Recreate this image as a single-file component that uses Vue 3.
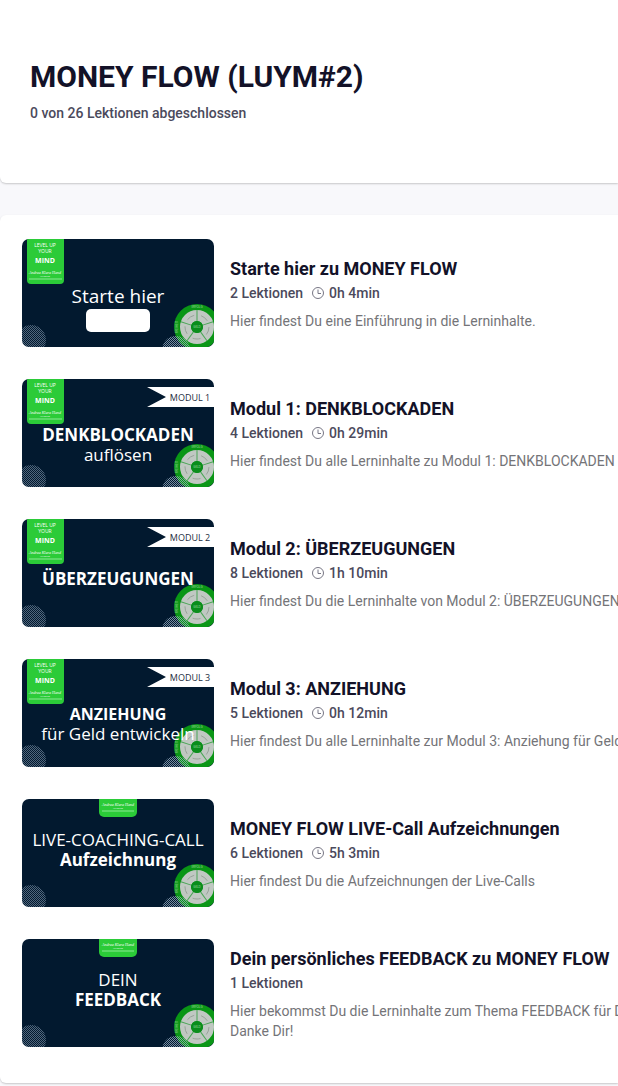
<script setup>
const spokes = [-90, -18, 54, 126, 198]

const modules = [
  {
    title: 'Starte hier zu MONEY FLOW', lessons: 2, time: '0h 4min',
    text: 'Hier findest Du eine Einführung in die Lerninhalte.',
    box: true,
    lines: [{ t: 'Starte hier', y: 64, size: 19 }],
  },
  {
    title: 'Modul 1: DENKBLOCKADEN', lessons: 4, time: '0h 29min',
    text: 'Hier findest Du alle Lerninhalte zu Modul 1: DENKBLOCKADEN',
    flag: 'MODUL 1',
    lines: [{ t: 'DENKBLOCKADEN', y: 62, size: 17, bold: true }, { t: 'auflösen', y: 82, size: 17 }],
  },
  {
    title: 'Modul 2: ÜBERZEUGUNGEN', lessons: 8, time: '1h 10min',
    text: 'Hier findest Du die Lerninhalte von Modul 2: ÜBERZEUGUNGEN',
    flag: 'MODUL 2',
    lines: [{ t: 'ÜBERZEUGUNGEN', y: 66, size: 17, bold: true }],
  },
  {
    title: 'Modul 3: ANZIEHUNG', lessons: 5, time: '0h 12min',
    text: 'Hier findest Du alle Lerninhalte zur Modul 3: Anziehung für Geld entwickeln',
    flag: 'MODUL 3',
    lines: [{ t: 'ANZIEHUNG', y: 61, size: 16, bold: true }, { t: 'für Geld entwickeln', y: 81, size: 17 }],
  },
  {
    title: 'MONEY FLOW LIVE-Call Aufzeichnungen', lessons: 6, time: '5h 3min',
    text: 'Hier findest Du die Aufzeichnungen der Live-Calls',
    small: true,
    lines: [{ t: 'LIVE-COACHING-CALL', y: 47, size: 17 }, { t: 'Aufzeichnung', y: 67, size: 17, bold: true }],
  },
  {
    title: 'Dein persönliches FEEDBACK zu MONEY FLOW', lessons: 1, time: '',
    text: 'Hier bekommst Du die Lerninhalte zum Thema FEEDBACK für Dich.\nDanke Dir!',
    small: true,
    lines: [{ t: 'DEIN', y: 47, size: 17 }, { t: 'FEEDBACK', y: 67, size: 17, bold: true }],
  },
]
</script>

<template>
  <main class="page">
    <header class="card head">
      <h1>MONEY FLOW (LUYM#2)</h1>
      <p class="meta">0 von 26 Lektionen abgeschlossen</p>
    </header>

    <section class="card list">
      <article v-for="(m, i) in modules" :key="i" class="item">
        <svg class="thumb" viewBox="0 0 192 108" role="img" :aria-label="m.title">
          <defs>
            <pattern :id="'dots' + i" width="2" height="2" patternUnits="userSpaceOnUse">
              <path d="M0 0h1v1H0zM1 1h1v1H1z" fill="#9db2c8" />
            </pattern>
          </defs>
          <rect width="192" height="108" fill="#02192f" />
          <circle cx="9" cy="101" r="15" :fill="`url(#dots${i})`" opacity=".5" />

          <g v-if="m.small">
            <path d="M77 0h38v13a5 5 0 0 1-5 5H82a5 5 0 0 1-5-5z" fill="#2bcb38" />
            <text class="sign" x="96" y="7">Andrea Klara Hand</text>
            <text class="tiny" x="96" y="10">AKADEMIE</text>
            <path d="M80 12h32" stroke="#8be893" />
          </g>
          <g v-else>
            <path d="M5 0h37v41a4 4 0 0 1-4 4H9a4 4 0 0 1-4-4z" fill="#2bcb38" />
            <text class="badge" x="23" y="8">LEVEL UP</text>
            <text class="badge" x="23" y="14">YOUR</text>
            <text class="badge strong" x="23" y="24">MIND</text>
            <text class="sign" x="23" y="35">Andrea Klara Hand</text>
            <text class="tiny" x="23" y="38">AKADEMIE</text>
            <path d="M7 40h33" stroke="#8be893" />
          </g>

          <g v-if="m.flag">
            <path d="M125 8h67v20h-67l19-10z" fill="#fff" />
            <text class="flag" x="168" y="22">{{ m.flag }}</text>
          </g>

          <g transform="translate(175 88)">
            <circle r="23" fill="#0a9616" />
            <circle r="11.5" fill="none" stroke="#c0c8c2" stroke-width="11" />
            <path v-for="a in spokes" :key="a" d="M6 0H17" stroke="#4aa556" :transform="`rotate(${a})`" />
            <circle
              r="12" fill="none" stroke="#98a39a"
              stroke-dasharray="8 7.08" stroke-dashoffset="15"
            />
            <circle r="6" fill="#0a8d1c" />
            <text class="gold" y="1">GELD</text>
            <text class="gold" y="-19">ERFOLG</text>
            <text class="gold" y="-19" transform="rotate(-90)">FREIHEIT</text>
          </g>
          <circle cx="154" cy="111" r="14" :fill="`url(#dots${i})`" opacity=".75" />

          <rect v-if="m.box" x="64" y="70" width="64" height="23" rx="5" fill="#fff" />
          <text
            v-for="l in m.lines" :key="l.t" x="96" :y="l.y" :font-size="l.size"
            :class="{ strong: l.bold }"
          >{{ l.t }}</text>
        </svg>

        <div class="info">
          <h2>{{ m.title }}</h2>
          <p class="meta">
            <span>{{ m.lessons }} Lektionen</span>
            <svg v-if="m.time" class="clock" viewBox="0 0 14 14" aria-hidden="true">
              <circle cx="7" cy="7" r="5.5" />
              <path d="M7 3.5V7.5H10" />
            </svg>
            <span v-if="m.time">{{ m.time }}</span>
          </p>
          <p class="desc">{{ m.text }}</p>
        </div>
      </article>
    </section>
  </main>
</template>

<style>
body {
  margin: 0;
  background: #f8f8fb;
}
</style>

<style scoped>
.page {
  font-family: Roboto, "Liberation Sans", sans-serif;
  color: #131228;
  overflow: hidden;
  padding-bottom: 3px;
}
h1, h2, p { margin: 0; }
.card {
  background: #fff;
  box-shadow: 0 1px 2px rgba(0, 0, 0, 0.2);
}
.head {
  padding: 59px 30px 60px;
  border-radius: 0 0 0 6px;
}
h1 {
  font-size: 30px;
  line-height: 36px;
  font-weight: 700;
  white-space: nowrap;
  margin-bottom: 8px;
}
.meta {
  display: flex;
  align-items: center;
  font-size: 14px;
  line-height: 20px;
  font-weight: 500;
  color: #4b4a5c;
}
.list {
  display: flex;
  flex-direction: column;
  gap: 32px;
  margin-top: 32px;
  padding: 24px 22px 36px;
  border-radius: 6px 0 0 6px;
}
.item {
  display: flex;
  align-items: center;
  gap: 16px;
}
.thumb {
  flex: none;
  width: 192px;
  height: 108px;
  border-radius: 7px;
}
h2 {
  font-size: 18px;
  line-height: 28px;
  font-weight: 700;
  white-space: nowrap;
}
.clock {
  width: 14px;
  height: 14px;
  margin: 0 4px 0 8px;
  fill: none;
  stroke: #777684;
  stroke-width: 1;
}
.desc {
  margin-top: 8px;
  font-size: 14px;
  line-height: 20px;
  color: #747478;
  white-space: pre;
}
.thumb text {
  font-family: "Open Sans", "Noto Sans", sans-serif;
  text-anchor: middle;
  fill: #fff;
}
.thumb .strong { font-weight: 700; }
.thumb .badge { font-size: 5px; }
.thumb .badge.strong { font-size: 7px; }
.thumb .sign {
  font-family: "Liberation Serif", serif;
  font-style: italic;
  font-size: 4px;
}
.thumb .tiny { font-size: 2px; }
.thumb .flag {
  font-size: 9px;
  fill: #1c2c40;
}
.thumb .gold {
  font-size: 3px;
  fill: #a5dfaa;
}
</style>
